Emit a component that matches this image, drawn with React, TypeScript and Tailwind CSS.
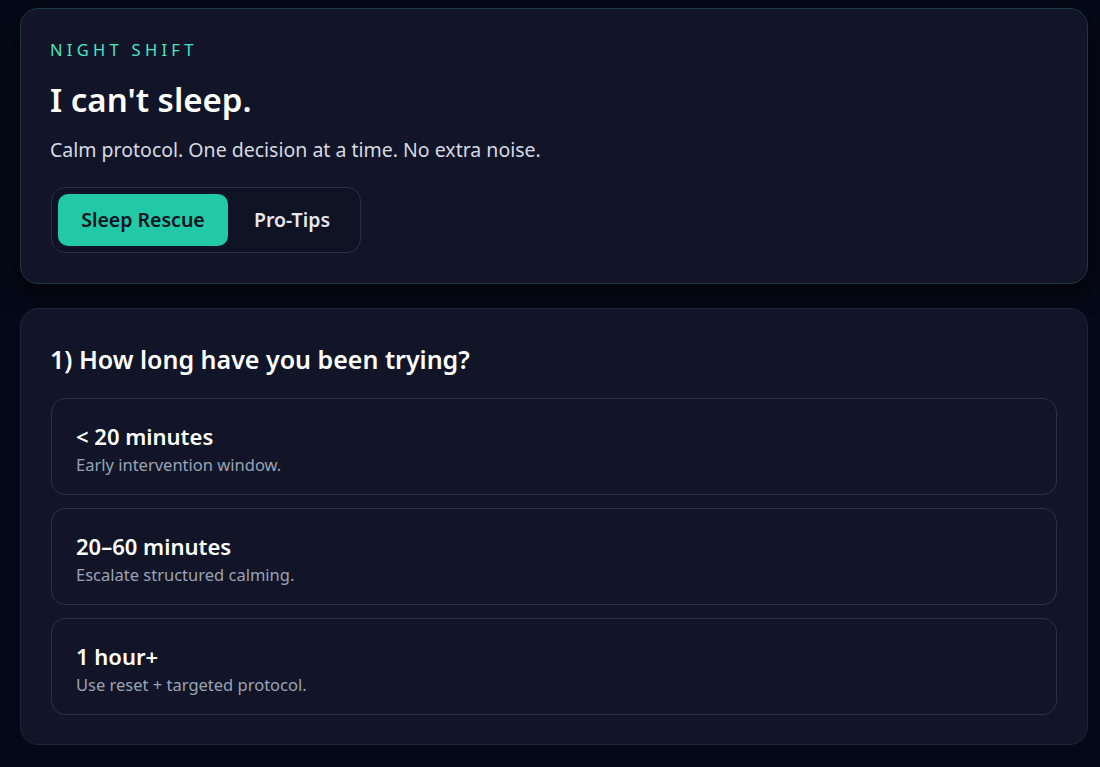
import React from "react";

const options = [
  { title: "< 20 minutes", desc: "Early intervention window." },
  { title: "20\u201360 minutes", desc: "Escalate structured calming." },
  { title: "1 hour+", desc: "Use reset + targeted protocol." },
];

export default function App() {
  return (
    <div
      className="min-h-[767px] w-full bg-[#050816] pt-2 pl-5 pr-3 pb-6"
      style={{ fontFamily: '"Noto Sans", "Open Sans", sans-serif' }}
    >
      <div className="flex flex-col gap-[24px]">
        <section className="rounded-[18px] border border-[#1b3a42] bg-[#111527] pl-[30px] pr-[29px] pt-[29px] pb-[30px] shadow-[0_10px_24px_rgba(0,0,0,0.5)]">
          <div className="-ml-px text-[16.5px] leading-[24px] tracking-[0.26em] text-[#4fe3c1]">NIGHT SHIFT</div>
          <h1 className="-ml-px mt-[18px] text-[33px] leading-[40px] font-semibold text-white">I can't sleep.</h1>
          <p className="-ml-px mt-[16px] text-[19.5px] leading-[28px] text-[#d6dae3]">
            Calm protocol. One decision at a time. No extra noise.
          </p>
          <div className="mt-[23px] inline-flex items-center gap-[2px] rounded-[14px] border border-[#2a3042] bg-[#0f1324] p-[6px]">
            <button className="h-[52px] w-[170px] rounded-[10px] bg-[#22c9a6] text-[19.5px] font-semibold text-[#0b1322]">
              Sleep Rescue
            </button>
            <button className="h-[52px] w-[124px] rounded-[10px] text-[19.5px] font-semibold text-[#e5e7ef]">
              Pro-Tips
            </button>
          </div>
        </section>

        <section className="rounded-[18px] border border-[#1f2436] bg-[#111527] px-[30px] pt-[33px] pb-[29px]">
          <h2 className="-ml-px text-[25px] leading-[34px] font-semibold text-white">1) How long have you been trying?</h2>
          <div className="mt-[22px] flex flex-col gap-[13px]">
            {options.map((o) => (
              <div
                key={o.title}
                className="h-[97px] rounded-[14px] border border-[#2b3244] bg-[#111527] px-6 pt-[23px]"
              >
                <div className="text-[22px] leading-[28px] font-semibold text-white">{o.title}</div>
                <div className="mt-[4px] text-[16.5px] leading-[22px] text-[#9aa3b5]">{o.desc}</div>
              </div>
            ))}
          </div>
        </section>
      </div>
    </div>
  );
}
